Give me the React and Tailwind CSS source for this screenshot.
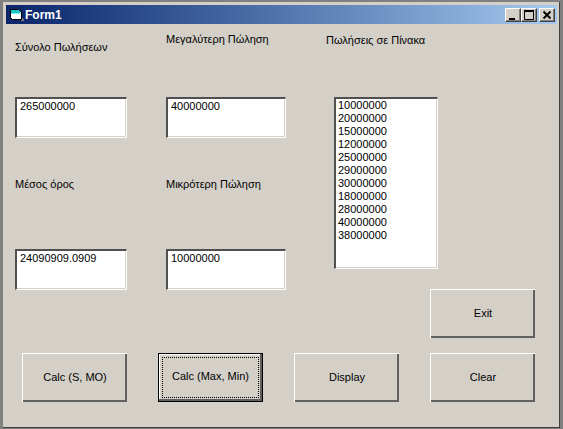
const FONT = "font-['Liberation_Sans',Arial,sans-serif]";
const SALES = [
  "10000000",
  "20000000",
  "15000000",
  "12000000",
  "25000000",
  "29000000",
  "30000000",
  "18000000",
  "28000000",
  "40000000",
  "38000000",
];

function CaptionButton({ children, className = "" }) {
  return (
    <div
      className={`flex h-[14px] w-[16px] items-center justify-center border border-t-white border-l-white border-r-[#404040] border-b-[#404040] bg-[#d4d0c8] shadow-[inset_-1px_-1px_0_#808080] ${className}`}
    >
      {children}
    </div>
  );
}

function FormIcon() {
  return (
    <svg viewBox="0 0 16 16" width="16" height="16" aria-hidden="true">
      <path d="M1.5 2.5h8l2 2h1v8h-9l-2-2Z" fill="#fff" stroke="#000" strokeWidth="1" />
      <path d="M2 3h7.5l2 2.5v1H2Z" fill="#12c8c8" />
      <path d="M13 11h1v1h1v2h-3v-1h1Z" fill="#808080" />
    </svg>
  );
}

function TitleBar() {
  return (
    <div className="flex h-[19px] items-center bg-gradient-to-r from-[#0a246a] to-[#a6caf0] pr-[2px] pl-[3px]">
      <FormIcon />
      <span className={`text-[12px] leading-none font-bold text-white ${FONT}`}>Form1</span>
      <div className="ml-auto flex items-center">
        <CaptionButton>
          <svg viewBox="0 0 10 10" width="10" height="10" aria-hidden="true">
            <path d="M1 8h6v2H1Z" fill="#000" />
          </svg>
        </CaptionButton>
        <CaptionButton>
          <svg viewBox="0 0 10 10" width="10" height="10" aria-hidden="true">
            <path d="M0.5 0.5h9v9h-9Z" fill="none" stroke="#000" strokeWidth="1" />
            <path d="M0 1h10" stroke="#000" strokeWidth="2" />
          </svg>
        </CaptionButton>
        <CaptionButton className="ml-[2px]">
          <svg viewBox="0 0 10 10" width="10" height="10" aria-hidden="true">
            <path d="M1.5 1.5l7 7M8.5 1.5l-7 7" stroke="#000" strokeWidth="1.8" />
          </svg>
        </CaptionButton>
      </div>
    </div>
  );
}

function Field({ value, className = "" }) {
  return (
    <div
      className={`h-[41px] shrink-0 border-t-2 border-r border-b border-l-2 border-t-[#505050] border-r-white border-b-white border-l-[#505050] bg-white px-[3px] pt-[1px] text-[11px] leading-[13px] text-black shadow-[inset_-1px_-1px_0_#d4d0c8] ${className}`}
    >
      {value}
    </div>
  );
}

function Button({ label, focused = false }) {
  if (focused) {
    return (
      <button className="flex h-[49px] w-[105px] items-center justify-center border border-black bg-[#d4d0c8] p-[3px] text-[11px] text-black shadow-[inset_-2px_-2px_0_#606060,inset_1px_1px_0_#fff]">
        <span className="flex h-full w-full items-center justify-center border border-dotted border-black pb-[2px]">
          {label}
        </span>
      </button>
    );
  }
  return (
    <button className="flex h-[49px] w-[105px] items-center justify-center border-t border-l border-t-white border-l-white bg-[#d4d0c8] pb-[2px] text-[11px] text-black shadow-[inset_-2px_-2px_0_#606060]">
      {label}
    </button>
  );
}

export default function App() {
  return (
    <div className={`h-[429px] w-[563px] overflow-hidden bg-[#d4d0c8] ${FONT}`}>
      <div className="h-full w-full border-t-2 border-r-[3px] border-b border-l-[3px] border-[#808080]">
        <div className="h-full w-full border-r border-b border-r-[#404040] border-b-[#404040] pt-[3px] pr-[2px] pl-[3px]">
          <div className="flex h-full flex-col">
            <TitleBar />
            <div className="flex h-[265px] text-[11px] leading-[13px] text-black">
              <div className="ml-[9px] flex w-[112px] flex-col">
                <span className="mt-[17px] h-[13px] whitespace-nowrap">Σύνολο Πωλήσεων</span>
                <Field value="265000000" className="mt-[43px] w-[112px]" />
                <span className="mt-[40px] h-[13px] whitespace-nowrap">Μέσος όρος</span>
                <Field value="24090909.0909" className="mt-[58px] w-[112px]" />
              </div>
              <div className="ml-[39px] flex w-[120px] flex-col">
                <span className="mt-[9px] h-[13px] whitespace-nowrap">Μεγαλύτερη Πώληση</span>
                <Field value="40000000" className="mt-[51px] w-[120px]" />
                <span className="mt-[40px] h-[13px] whitespace-nowrap">Μικρότερη Πώληση</span>
                <Field value="10000000" className="mt-[58px] w-[120px]" />
              </div>
              <div className="ml-[40px] flex flex-col">
                <span className="mt-[10px] h-[13px] whitespace-nowrap">Πωλήσεις σε Πίνακα</span>
                <div className="mt-[50px] ml-[8px] h-[172px] w-[104px] border-t-2 border-r border-b border-l-2 border-t-[#505050] border-r-white border-b-white border-l-[#505050] bg-white px-[2px] shadow-[inset_-1px_-1px_0_#d4d0c8]">
                  {SALES.map((sale) => (
                    <div key={sale}>{sale}</div>
                  ))}
                </div>
              </div>
            </div>
            <div className="flex justify-end pr-[22px]">
              <Button label="Exit" />
            </div>
            <div className="mt-[15px] flex gap-[31px] pl-[16px]">
              <Button label="Calc (S, MO)" />
              <Button label="Calc (Max, Min)" focused />
              <Button label="Display" />
              <Button label="Clear" />
            </div>
          </div>
        </div>
      </div>
    </div>
  );
}
